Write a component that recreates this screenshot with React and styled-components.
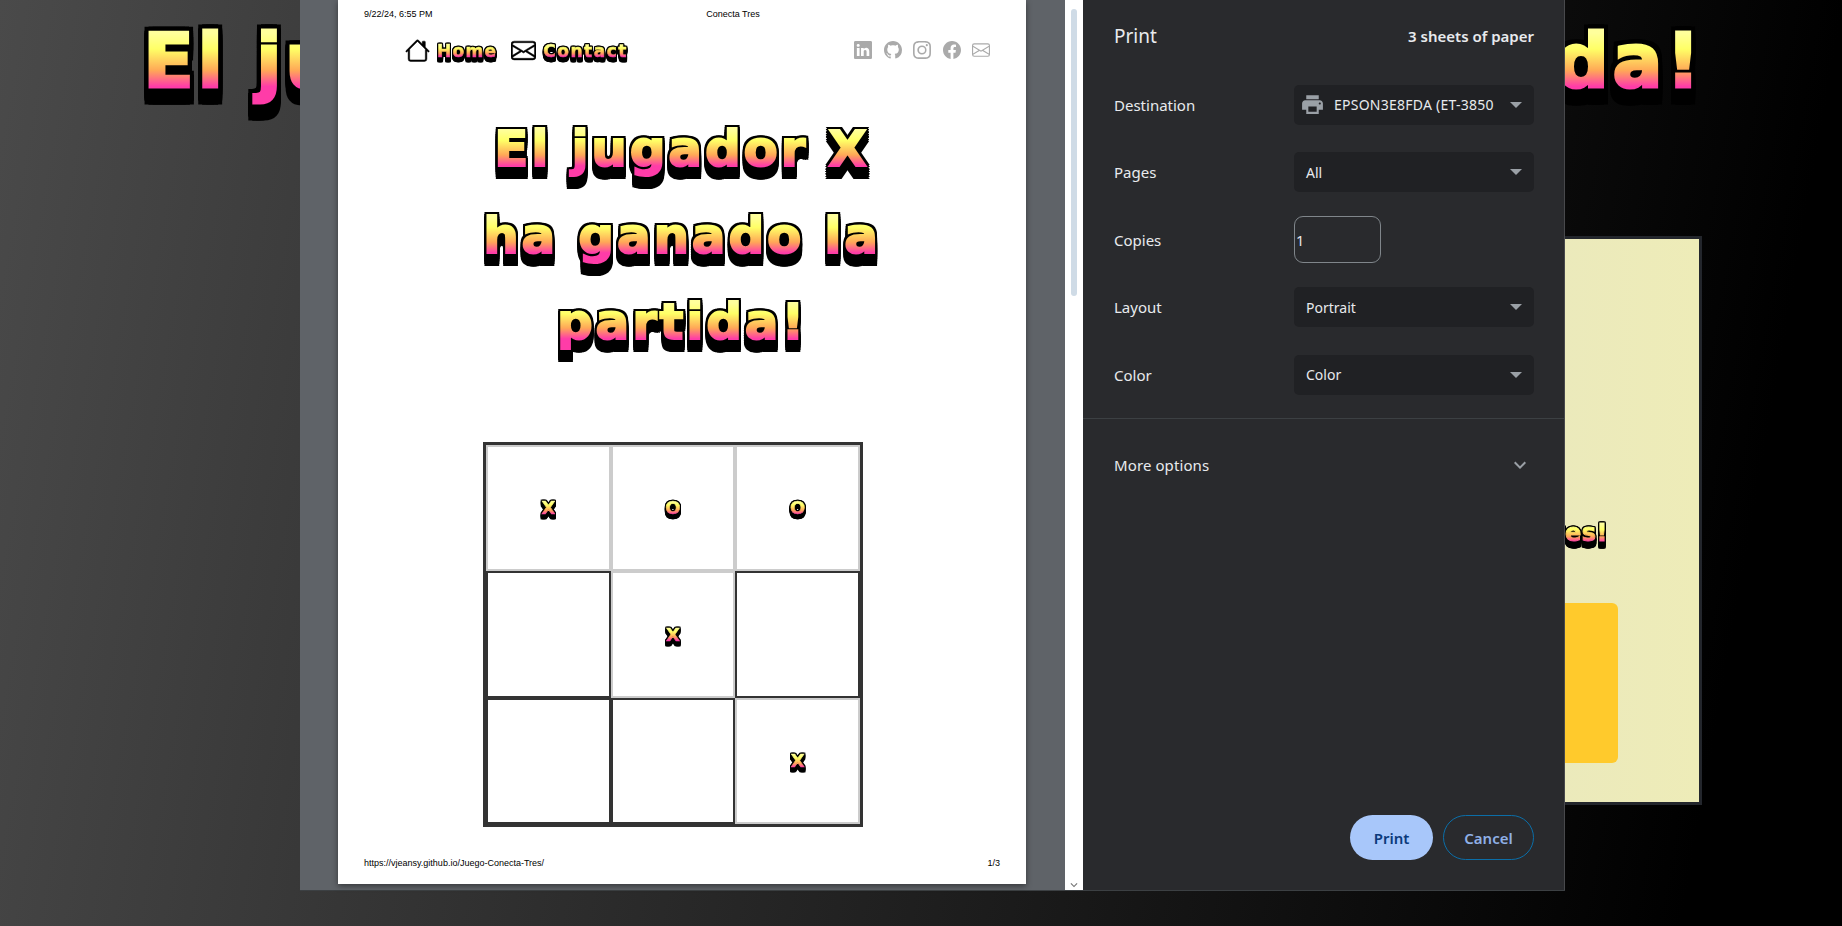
import React from 'react';
import styled, {createGlobalStyle} from 'styled-components';
import {MdPrint, MdExpandMore} from 'react-icons/md';
import {BsLinkedin, BsGithub, BsInstagram, BsFacebook, BsEnvelope, BsHouse} from 'react-icons/bs';

const GlobalStyle = createGlobalStyle`
  html, body {
    margin: 0;
    padding: 0;
    height: 100%;
    overflow: hidden;
  }
`;

const Page = styled.div`
  position: relative;
  width: 1842px;
  height: 926px;
  overflow: hidden;
  display: flex;
  flex-direction: column;
  align-items: center;
  background: linear-gradient(100deg, #4a4a4a 0%, #000 92%);
`;

// blocky gradient title text, black outline and drop are stacked filters
const GlowText = styled.span`
  display: block;
  width: fit-content;
  font-family: "DejaVu Sans", sans-serif;
  font-weight: 700;
  font-size: ${p => p.$size}px;
  line-height: 1.2;
  letter-spacing: ${p => p.$spacing || 0}px;
  white-space: nowrap;
  color: transparent;
  background: linear-gradient(180deg, #ffff9c 18%, #ffff66 36%, #ffa857 60%, #ff3ca8 78%, #ff3ca8 100%);
  -webkit-background-clip: text;
  background-clip: text;
  -webkit-text-stroke: ${p => p.$stroke || 0}px transparent;
  filter:
    drop-shadow(${p => p.$o}px 0 0 #000)
    drop-shadow(-${p => p.$o}px 0 0 #000)
    drop-shadow(0 -${p => p.$o}px 0 #000)
    drop-shadow(0 ${p => p.$o}px 0 #000)
    drop-shadow(0 ${p => p.$d}px 0 #000)
    drop-shadow(0 ${p => p.$d}px 0 #000);
`;

const BackTitle = styled.div`
  margin: 17px 0 0 5px;
`;

const BackCard = styled.div`
  margin-top: 130px;
  align-self: flex-end;
  margin-right: 140px;
  width: 600px;
  height: 569px;
  box-sizing: border-box;
  border: 3px solid #23262c;
  background: linear-gradient(90deg, #e2e2c6, #eeecb8);
  display: flex;
  flex-direction: column;
  align-items: flex-end;
  padding: 280px 81px 0 0;
`;

const CardText = styled(GlowText)`
  margin-right: 10px;
`;

const YellowBox = styled.div`
  margin-top: 55px;
  width: 400px;
  height: 160px;
  border-radius: 6px;
  background: #ffca2c;
`;

const Dialog = styled.div`
  position: absolute;
  left: 300px;
  top: 0;
  width: 1265px;
  height: 891px;
  display: flex;
  box-sizing: border-box;
  border-bottom: 1px solid #3c4043;
  font-family: "Noto Sans", sans-serif;
`;

const Preview = styled.div`
  width: 765px;
  background: #5f6368;
  padding-left: 38px;
  box-sizing: border-box;
`;

const Paper = styled.div`
  width: 688px;
  height: 884px;
  background: #fff;
  box-shadow: 0 2px 6px rgba(0, 0, 0, 0.45);
  display: flex;
  flex-direction: column;
  font-family: "Liberation Sans", sans-serif;
  color: #000;
`;

const PrintLine = styled.div`
  display: grid;
  grid-template-columns: 310px 118px 1fr;
  padding: 0 26px;
  font-size: 9px;
  line-height: 10px;
  margin-top: ${p => p.$top}px;
  & > :nth-child(2) {
    text-align: center;
  }
`;

const NavBar = styled.div`
  display: flex;
  align-items: flex-start;
  margin-top: 19px;
  padding-left: 67px;
  padding-right: 36px;
  height: 28px;
`;

const NavLink = styled.div`
  display: flex;
  align-items: flex-start;
  gap: 7px;
  margin-right: 14px;
  color: #000;
  font-size: 25px;
  line-height: 0;
  & > svg {
    stroke: currentColor;
    stroke-width: 0.3;
  }
`;

const NavText = styled(GlowText)`
  margin-top: 3px;
`;

const Socials = styled.div`
  margin-left: auto;
  display: flex;
  gap: 11.5px;
  padding-top: 3px;
  color: #aaa;
  font-size: 18px;
  line-height: 0;
`;

const Headline = styled.div`
  margin-top: 53px;
  display: flex;
  flex-direction: column;
  align-items: center;
  gap: 26.5px;
`;

const Board = styled.div`
  margin: 90px 0 0 145px;
  width: 380px;
  height: 385px;
  box-sizing: border-box;
  border: 3px solid #333;
  display: grid;
  grid-template-columns: repeat(3, 1fr);
  grid-template-rows: repeat(3, 1fr);
`;

const Cell = styled.div`
  box-sizing: border-box;
  border: 2px solid ${p => (p.$filled ? '#ccc' : '#333')};
  display: flex;
  align-items: center;
  justify-content: center;
`;

const PaperFoot = styled(PrintLine)`
  margin-top: auto;
  margin-bottom: 16px;
  grid-template-columns: 1fr 1fr;
  & > :nth-child(2) {
    text-align: right;
  }
`;

const ScrollTrack = styled.div`
  width: 18px;
  background: #fff;
  display: flex;
  flex-direction: column;
  align-items: center;
  color: #777;
`;

const ScrollThumb = styled.div`
  width: 6px;
  height: 287px;
  margin-top: 1px;
  border-radius: 3px;
  background: #cfdbe6;
`;

const ScrollArrow = styled.div`
  margin-top: ${p => (p.$end ? 'auto' : '0')};
  padding-bottom: ${p => (p.$end ? '4px' : '0')};
  height: 8px;
  line-height: 0;
`;

const Panel = styled.div`
  flex: 1;
  background: #292a2d;
  border-right: 1px solid #48494c;
  color: #e8eaed;
  display: flex;
  flex-direction: column;
`;

const Section = styled.div`
  padding: 0 30px 0 31px;
`;

const TitleRow = styled(Section)`
  height: 71px;
  display: flex;
  align-items: center;
  justify-content: space-between;
`;

const Title = styled.div`
  font-size: 19px;
  font-weight: 400;
`;

const Sheets = styled.div`
  font-size: 15px;
  font-weight: 600;
`;

const Row = styled.div`
  display: grid;
  grid-template-columns: 180px 1fr;
  align-items: center;
  height: 67.5px;
  font-size: 15px;
`;

const Select = styled.div`
  height: 40px;
  border-radius: 5px;
  background: #202124;
  display: flex;
  align-items: center;
  padding: 0 12px 0 ${p => (p.$icon ? '6px' : '12px')};
  font-size: 14px;
  color: #e8eaed;
  gap: 9px;
  white-space: nowrap;
`;

const PrinterName = styled.span`
  letter-spacing: 0.25px;
`;

const Caret = styled.div`
  margin-left: auto;
  flex: none;
  width: 0;
  height: 0;
  border-left: 6.5px solid transparent;
  border-right: 6.5px solid transparent;
  border-top: 6.5px solid #9aa0a6;
`;

const CopiesInput = styled.input`
  width: 87px;
  height: 47px;
  box-sizing: border-box;
  padding: 0 0 0 1px;
  border: 1px solid #80868b;
  border-radius: 9px;
  background: transparent;
  color: #e8eaed;
  font-family: inherit;
  font-size: 14.5px;
  outline: none;
`;

const Divider = styled.div`
  margin-top: 9px;
  border-top: 1px solid #3c4043;
`;

const MoreRow = styled(Section)`
  height: 92px;
  display: flex;
  align-items: center;
  justify-content: space-between;
  padding-right: 32px;
  font-size: 15px;
  letter-spacing: 0.1px;
  color: #9aa0a6;
  & > span {
    color: #e8eaed;
  }
`;

const Actions = styled(Section)`
  margin-top: auto;
  padding-bottom: 30px;
  display: flex;
  justify-content: flex-end;
  gap: 10px;
`;

const Button = styled.button`
  height: 45px;
  width: ${p => p.$width}px;
  border-radius: 23px;
  box-sizing: border-box;
  font-family: inherit;
  font-size: 15px;
  font-weight: 600;
  border: ${p => (p.$primary ? 'none' : '1px solid #0b6ea8')};
  background: ${p => (p.$primary ? '#a8c7fa' : 'transparent')};
  color: ${p => (p.$primary ? '#0b3a7a' : '#8fb0e6')};
`;

const cells = ['X', 'O', 'O', '', 'X', '', '', '', 'X'];

const App = () => (
    <Page>
        <GlobalStyle/>
        <BackTitle>
            <GlowText $size={74} $o={4} $d={6} $stroke={3} $spacing={3.75}>El jugador X ha ganado la partida!</GlowText>
        </BackTitle>
        <BackCard>
            <CardText $size={24} $o={1} $d={3} $stroke={1} $spacing={0.5}>Jugadores!</CardText>
            <YellowBox/>
        </BackCard>

        <Dialog>
            <Preview>
                <Paper>
                    <PrintLine $top={9}>
                        <span>9/22/24, 6:55 PM</span>
                        <span>Conecta Tres</span>
                        <span/>
                    </PrintLine>
                    <NavBar>
                        <NavLink>
                            <BsHouse/>
                            <NavText $size={17} $o={1} $d={2} $stroke={0.6} $spacing={1.3}>Home</NavText>
                        </NavLink>
                        <NavLink>
                            <BsEnvelope/>
                            <NavText $size={17} $o={1} $d={2} $stroke={0.6} $spacing={1.5}>Contact</NavText>
                        </NavLink>
                        <Socials>
                            <BsLinkedin/>
                            <BsGithub/>
                            <BsInstagram/>
                            <BsFacebook/>
                            <BsEnvelope/>
                        </Socials>
                    </NavBar>
                    <Headline>
                        <GlowText $size={50} $o={2} $d={5} $stroke={2} $spacing={2.8}>El jugador X</GlowText>
                        <GlowText $size={50} $o={2} $d={5} $stroke={2} $spacing={2.8}>ha ganado la</GlowText>
                        <GlowText $size={50} $o={2} $d={5} $stroke={2} $spacing={2.8}>partida!</GlowText>
                    </Headline>
                    <Board>
                        {cells.map((c, index) => (
                            <Cell key={index} $filled={c !== ''}>
                                {c && <GlowText $size={18} $o={1} $d={2} $stroke={0.6}>{c}</GlowText>}
                            </Cell>
                        ))}
                    </Board>
                    <PaperFoot>
                        <span>https://vjeansy.github.io/Juego-Conecta-Tres/</span>
                        <span>1/3</span>
                    </PaperFoot>
                </Paper>
            </Preview>
            <ScrollTrack>
                <ScrollArrow/>
                <ScrollThumb/>
                <ScrollArrow $end><MdExpandMore size={14}/></ScrollArrow>
            </ScrollTrack>
            <Panel>
                <TitleRow>
                    <Title>Print</Title>
                    <Sheets>3 sheets of paper</Sheets>
                </TitleRow>
                <Section>
                    <Row>
                        <span>Destination</span>
                        <Select $icon>
                            <MdPrint size={25} color="#9aa0a6"/>
                            <PrinterName>EPSON3E8FDA (ET-3850</PrinterName>
                            <Caret/>
                        </Select>
                    </Row>
                    <Row>
                        <span>Pages</span>
                        <Select><span>All</span><Caret/></Select>
                    </Row>
                    <Row>
                        <span>Copies</span>
                        <CopiesInput defaultValue="1" readOnly/>
                    </Row>
                    <Row>
                        <span>Layout</span>
                        <Select><span>Portrait</span><Caret/></Select>
                    </Row>
                    <Row>
                        <span>Color</span>
                        <Select><span>Color</span><Caret/></Select>
                    </Row>
                </Section>
                <Divider/>
                <MoreRow>
                    <span>More options</span>
                    <MdExpandMore size={24}/>
                </MoreRow>
                <Actions>
                    <Button $primary $width={83}>Print</Button>
                    <Button $width={91}>Cancel</Button>
                </Actions>
            </Panel>
        </Dialog>
    </Page>
);

export default App;
